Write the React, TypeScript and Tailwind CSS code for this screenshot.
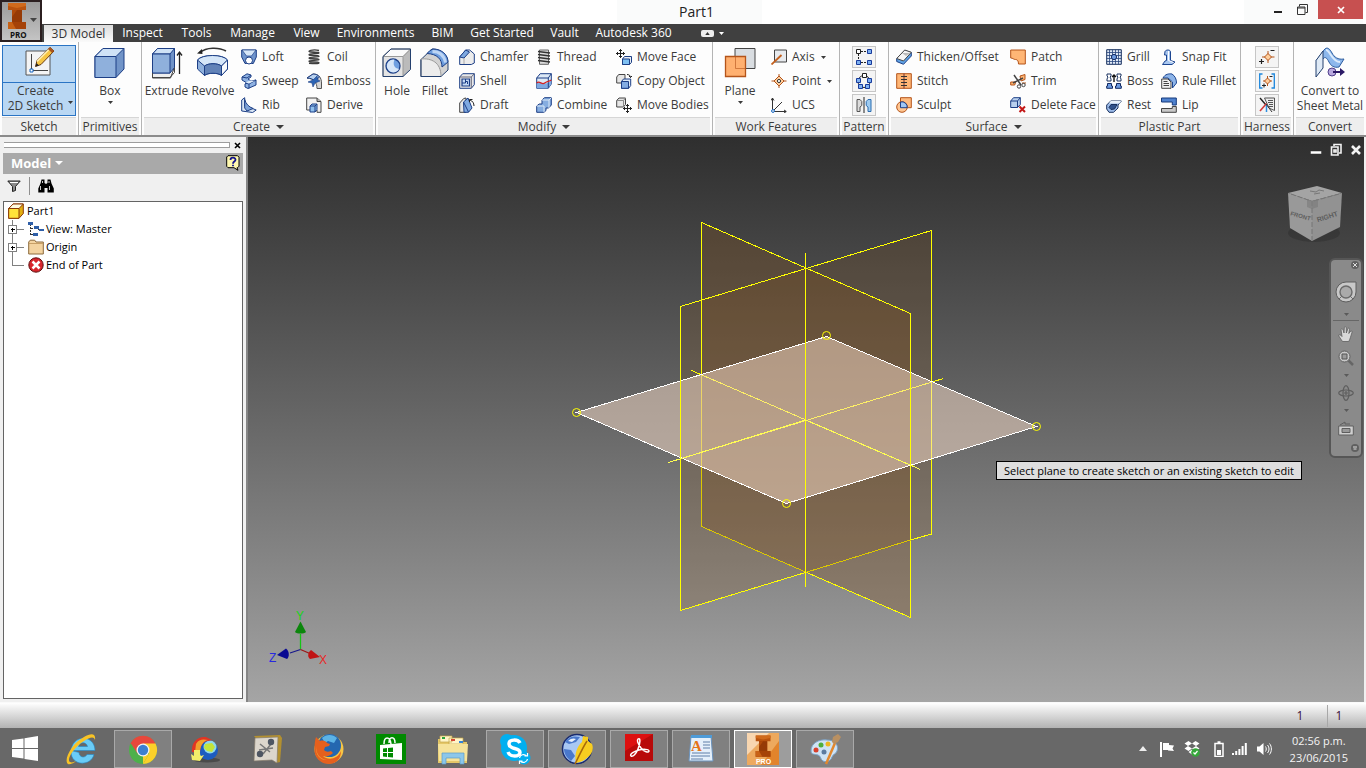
import React from "react";
import type { ReactNode } from "react";

const NAVY = "#1d3f86";
const DARK = "#454545";
const RUST = "#b4541a";

const small: Record<string, ReactNode> = {
  loft: (
    <>
      <path d="M.7 1h14.600v7l-3 6.500H4L.7 8z" fill="#6f94cc" stroke={NAVY} />
      <path d="M1 1h14l-4.500 6h-5z" fill="#d6e6f7" stroke={NAVY} strokeWidth=".7" />
      <circle cx="8" cy="11.500" r="3.500" fill="#fff" stroke={NAVY} />
    </>
  ),
  sweep: (
    <>
      <path d="M1 4l5-3.200L10 2v2l-3 2 3 2 5-1v5l-8 3.500-3-1.500v-3l2-1-5-3z" fill="#8fb2e2" stroke={NAVY} />
      <path d="M1 4l5 1 4-3M4 10l4 1 7-4M8 11v4.500" fill="none" stroke={NAVY} />
      <path d="M4.500 9.500L9 7.500l5 .2-6 2.800z" fill="#deebf9" />
    </>
  ),
  rib: (
    <>
      <path d="M.7 3l3-2.300V9l9 3 2.500 1-3.500 2.500L.7 14z" fill="#dce8f6" stroke={NAVY} />
      <path d="M3.700 2.500c1 4 4 7.500 8.500 9L6 14 3.700 11z" fill="#7ea3d8" stroke={NAVY} />
    </>
  ),
  coil: (
    <g fill="none" stroke="#3d3d3d" strokeWidth="1.300">
      <path d="M13 1.500C9 .5 3 1 3 2.500s10 0 10 1.500-10 0-10 1.700 10 0 10 1.600-10 0-10 1.700 10 0 10 1.600-10 0-10 1.700 10 0 10 1.400-6 1-10 .6" />
      <path d="M3 2.500l10 1.500M3 5.700l10 1.600M3 9l10 1.600M3 12.300L13 13.700" strokeWidth=".8" />
    </g>
  ),
  emboss: (
    <>
      <path d="M1 5l6-4c6 0 8.500 4 8.500 9v5.500H11C11 10 8 5.500 1 5z" fill="#d5d5d5" stroke="#555" />
      <path d="M1 5l6-4c3 0 5 1 6.500 3l-5 4C7 6 4 5 1 5z" fill="#b9d2ef" stroke={NAVY} />
      <path d="M2 9l5-2 4-4 1 4 2 1-5 2-2 4-1-4z" fill="#2c64b4" stroke={NAVY} strokeWidth=".6" />
    </>
  ),
  derive: (
    <>
      <path d="M.7 1H11l4 3.500V15.300H11V13H.7z" fill="#f1f1f1" stroke={DARK} />
      <path d="M11 1v3.500h4" fill="#bbb" stroke={DARK} />
      <path d="M4 9l2-2h5v5.500l-2 2.500H4z" fill="#8fc0ee" stroke={NAVY} />
      <path d="M4 9h5l2-2M9 9v6" fill="none" stroke={NAVY} />
    </>
  ),
  chamfer: (
    <>
      <path d="M.7 8l6-7h4L15.300 5v9l-3 1.500H.7z" fill="#ececec" stroke={NAVY} />
      <path d="M.7 8l6-7L10.500 3 5 9z" fill="#7fa9e0" stroke={NAVY} />
      <path d="M5 9v6" stroke="#aaa" />
    </>
  ),
  shell: (
    <>
      <path d="M.7 4l3-3.300h11.600v11l-3 3.600H.7z" fill="#e9e9e9" stroke={NAVY} />
      <path d="M.7 4h11.600l3-3.300M12.300 4v11.300" fill="none" stroke="#667" />
      <path d="M3 6h7.500v7H3z" fill="#c5daf5" stroke={NAVY} strokeWidth="1.200" />
      <path d="M6.500 6v4H3M6 8.500h2.500V11" fill="none" stroke={NAVY} />
    </>
  ),
  draft: (
    <>
      <path d="M.7 6l4-4.500L7 1v14.300H.7z" fill="#e9e9e9" stroke={DARK} />
      <path d="M4.500 5L9 1l4 10-3.500 4.300H5z" fill="#7fa9e0" stroke={NAVY} />
      <path d="M4.500 5l5 10" stroke={NAVY} />
      <path d="M11 3c2.500 1 4 3 4 6M10.500 5V2.500h3" fill="none" stroke="#222" />
    </>
  ),
  thread: (
    <>
      <path d="M3.500 1h9v14.300h-9z" fill="#ddd" stroke="#666" />
      <path d="M2 2.500L14 4M2 5.500L14 7M2 8.500L14 10M2 11.500L14 13" stroke="#333" strokeWidth="1.300" />
    </>
  ),
  split: (
    <>
      <path d="M.7 5l3.500-4.300h11.100V11l-3 4.300H.7z" fill="#dde9f6" stroke={NAVY} />
      <path d="M.7 10.500c3-3 5 2 8 0l3.600-.5 3-3V11l-3 4.300H.7z" fill="#7fa9e0" />
      <path d="M.7 5h11.600l3-4.300M12.300 5v10" fill="none" stroke={NAVY} />
      <path d="M.7 10c3-3 5 2.500 8 0s4-1 6.600-3" fill="none" stroke="#d42020" strokeWidth="1.300" />
    </>
  ),
  combine: (
    <>
      <path d="M.7 9l2.500-2H6V3l2.500-2.300h6.800V8l-2.600 3H10v2.500l-2 1.800H.7z" fill="#86ade0" stroke={NAVY} />
      <path d="M6 3h7l2.300-2.300M13 3v8M.7 9H8v6.300" fill="none" stroke="#dbe8f6" />
    </>
  ),
  moveFace: (
    <>
      <path d="M4.500 0v9M0 4.500h9M3 1.500h3M3 7.500h3M1.500 3v3M7.500 3v3" stroke="#222" fill="none" />
      <path d="M6.500 10l2-2.500h7v5.800l-2 2.200h-7z" fill="#e9eef5" stroke={NAVY} />
      <path d="M6.500 10h7v5.500h-7z" fill="#7fc0f2" stroke={NAVY} />
    </>
  ),
  copyObject: (
    <>
      <path d="M.7 4l2-2.500H9v6L7 10H.7z" fill="#e6e6e6" stroke={DARK} />
      <path d="M5.500 8.500l2-2.500h7.200v6.500l-2 2.800H5.500z" fill="#dce8f6" stroke={NAVY} />
      <path d="M5.500 8.500h7v6.800h-7z" fill="#83ace2" stroke={NAVY} />
      <path d="M11 1.500c2 0 3.500 1 3.500 3M13 3l1.500 1.500L16 3" fill="none" stroke="#222" />
    </>
  ),
  moveBodies: (
    <>
      <path d="M.7 3.500L3 1h6.500v6.500l-2 2.500H.7z" fill="#e6e6e6" stroke={DARK} />
      <path d="M.7 3.500h6.800L9.500 1M7.500 3.500V10" fill="none" stroke="#888" />
      <path d="M11.500 7v9M7 11.500h9M10 8.500h3M10 14.500h3M8.500 10v3M14.500 10v3" stroke="#222" />
    </>
  ),
  axis: (
    <>
      <path d="M3.500 1h12v12h-12z" fill="#e7eaee" stroke={DARK} />
      <path d="M.5 15.500L10.500 6" stroke="#c3601e" strokeWidth="1.800" />
    </>
  ),
  point: (
    <>
      <path d="M8 1v14M.5 8h15" stroke={RUST} />
      <path d="M8 3l5 5-5 5-5-5z" fill="#ffcf9d" stroke={RUST} />
      <circle cx="8" cy="8" r="1.600" fill="#fff" stroke="#333" />
    </>
  ),
  ucs: (
    <g fill="none" stroke="#333">
      <path d="M1.500 1v13.500H15M1.500 14.500L11 5M0 3.500L1.500 1 3 3.500M13 13l2.300 1.500L13 16" />
      <circle cx="2" cy="14" r="1.400" fill="#fff" stroke="#1565c0" />
    </g>
  ),
  rect: (
    <g stroke="#222" fill="none">
      <path d="M5 2.500h6M2.500 5v6M5 13.500h6" strokeDasharray="2 1" />
      <path d="M.5.500h4v4h-4z" fill="#fff" />
      <path d="M11.500.500h4v4h-4zM.5 11.500h4v4h-4zM11.500 11.500h4v4h-4z" fill="#7db0f0" stroke="#173a9c" />
    </g>
  ),
  circ: (
    <g stroke="#222">
      <circle cx="8" cy="8.500" r="6" fill="none" />
      <path d="M6.500.500h4v4h-4z" fill="#fff" />
      <path d="M.5 5.500h4v4h-4zM11.500 5.500h4v4h-4zM2.500 11.500h4v4h-4zM9.500 11.500h4v4h-4z" fill="#7db0f0" stroke="#173a9c" />
    </g>
  ),
  mirror: (
    <>
      <path d="M8 0v16" stroke="#222" />
      <path d="M1 2.500h3l1.800 2v4L4 10v4.500H1z" fill="#dcdcdc" stroke="#555" />
      <path d="M15 2.500h-3l-1.800 2v4L12 10v4.500h3z" fill="#9ecbf0" stroke="#2b6cb0" />
    </>
  ),
  thicken: (
    <>
      <path d="M.7 10l8-8.500 6.600 2V7L7.500 15.300.7 12.500z" fill="#5fa3e6" stroke={NAVY} />
      <path d="M.7 9.500l8-8.500 6.600 2.300L7.500 12z" fill="#f6f6f6" stroke="#444" />
      <path d="M6 4l4 3 4-3" fill="#bbb" />
    </>
  ),
  stitch: (
    <>
      <path d="M.7.700h14.600v14.600H.7z" fill="#ffb675" stroke={RUST} />
      <path d="M8 .7v14.600" stroke="#733" />
      <path d="M5 3.500h6M5 6.500h6M5 9.500h6M5 12.500h6" stroke="#333" strokeWidth="1.200" />
    </>
  ),
  sculpt: (
    <>
      <path d="M4.500.700h10.800v10H4.500z" fill="#ffbb80" stroke={RUST} />
      <circle cx="6" cy="10" r="5.300" fill="#ffc692" stroke={RUST} />
      <path d="M4.500 5a5.300 5.300 0 0 1 6.700 5.700H4.500z" fill="#9fc6f5" stroke={NAVY} />
    </>
  ),
  patch: <path d="M.7 1h14.600v14H8.500c0-3-1-4.500-3-4.500S3 9 .7 9z" fill="#ffb675" stroke={RUST} />,
  trim: (
    <>
      <path d="M10 3l5-1.500v5L11 8z" fill="#ffb675" stroke={RUST} />
      <path d="M.7 9h5l-1 3h-4zM12 10h4" fill="#ffb675" stroke={RUST} />
      <path d="M4 2l7 10M13 5L3 10" stroke="#444" strokeWidth="1.500" />
      <circle cx="9" cy="13.500" r="1.700" fill="none" stroke="#444" />
      <circle cx="13.500" cy="12" r="1.700" fill="none" stroke="#444" />
    </>
  ),
  deleteFace: (
    <>
      <path d="M.7 4L3.500.7h6.800v6.800L7.500 10.500H.7z" fill="#b9d0ee" stroke={NAVY} />
      <path d="M.7 4h6.800L10.300.7M7.500 4v6.500" fill="none" stroke={NAVY} />
      <path d="M9.500 9.500l5.500 5.500M15 9.500L9.500 15" stroke="#c31818" strokeWidth="2" />
    </>
  ),
  grill: (
    <>
      <path d="M.7.700h14.600v14.600H.7z" fill="#dfe8f5" stroke="#18305e" />
      <path d="M3.500.7v14.600M6.500.7v14.600M9.500.7v14.600M12.500.7v14.600M.7 3.500h14.600M.7 6.500h14.600M.7 9.500h14.600M.7 12.500h14.600" stroke="#27447c" strokeWidth=".8" />
      <circle cx="8" cy="8" r="2.600" fill="#6e9be0" stroke="#122a63" />
    </>
  ),
  boss: (
    <>
      <path d="M1 1h4v2l-1 1 1 2v2H1V6l1-2-1-1zM11 1h4v2l-1 1 1 2v2h-4V6l1-2-1-1z" fill="#fff" stroke="#18305e" />
      <path d="M1.500 10.500h4v2.500h1v2.300H.7V13h.8zM10.500 10.500h4v2.500h.8v2.300H9.500V13h1z" fill="#6e9be0" stroke="#122a63" />
      <path d="M8 9V2M6 4l2-2 2 2" stroke="#111" strokeWidth="1.400" fill="none" />
    </>
  ),
  rest: (
    <>
      <path d="M.7 8l4-4h10.600L12 8v3l-4.500 4.300H3L.7 12z" fill="#9dbcea" stroke="#18305e" />
      <path d="M5 7.500h6L8.500 12 5 12.500 3 10.500z" fill="#31528c" stroke="#18305e" />
      <path d="M4.700 4h10.600l-2 2.500H3z" fill="#e8f0fa" />
    </>
  ),
  snap: (
    <>
      <path d="M4 2.500c1-2 5-2 5.500 0v9L14 13l-3 2.500H1.500L4 12l1.500-.5V6H3.500z" fill="#a9c7f0" stroke="#1c4590" />
      <path d="M7.500 2v9.500l5 2" fill="none" stroke="#fff" />
    </>
  ),
  ruleFillet: (
    <>
      <path d="M2 5C4 1 8 .5 11 1c3 2 4.500 5 4.500 9l-4 5V9L7 5z" fill="#8db4e8" stroke="#1c4590" />
      <path d="M.7 6H7l3 3v6.300H.7z" fill="#f0f0f0" stroke="#444" />
      <path d="M2.500 8.500h4M2.500 10.500h5.500M2.500 12.500h5.500" stroke="#444" />
    </>
  ),
  lip: (
    <>
      <path d="M.5 1h14.800v7h-4V5H.5z" fill="#4f82cf" stroke="#173a7c" />
      <path d="M.5 11.500h10.800V9.500h4v5.800H.5z" fill="#c9c9c9" stroke="#444" />
    </>
  ),
  harnessPoint: (
    <>
      <path d="M9 2v12M3 8h12.500" stroke={RUST} />
      <path d="M9 4.500L12.500 8 9 11.500 5.500 8z" fill="#ffcf9d" stroke={RUST} />
      <path d="M11.500 1.500h4M0 12.500h5M2.500 10v5" stroke="#222" strokeWidth="1.200" />
    </>
  ),
  harnessBracket: (
    <>
      <path d="M3.500 1H.7v14h2.800M12.500 1h2.800v14h-2.800" fill="none" stroke="#1c86dc" strokeWidth="1.300" />
      <path d="M8.500 3v10M4 8h9" stroke={RUST} />
      <path d="M8.500 5L11.500 8l-3 3-3-3z" fill="#ffcf9d" stroke={RUST} />
      <path d="M10.500 3.500h3M3 12.500h4M5 10.500v4" stroke="#222" />
    </>
  ),
  harnessSheet: (
    <>
      <path d="M5.500 1h10v12.500L10 11z" fill="#eee" stroke="#555" />
      <path d="M9 3.500h5M9 5.500h5M10 7.500h4M10 9.500h4" stroke="#555" />
      <path d="M1 1l6 7" stroke="#222" strokeWidth="1.400" />
      <path d="M7.500 6.500L1 14" stroke="#d33a3a" strokeWidth="1.600" />
      <path d="M7.500 8v7" stroke="#2e8fe0" strokeWidth="1.500" />
      <path d="M7 7l6 8" stroke="#333" />
    </>
  ),
};

const big: Record<string, ReactNode> = {
  sketch: (
    <>
      <path d="M3 5h24v24H3z" fill="#f4f4f4" stroke="#555" />
      <path d="M8.500 8v16.500H25" fill="none" stroke="#444" />
      <path d="M7 23h3v3H7z" fill="#fff" stroke="#1565c0" />
      <path d="M12.500 20.500l1.500-6L27 1.500 31 5 18 18.500z" fill="#f6c544" stroke="#6b3a10" />
      <path d="M14 15.500L26 3.500" stroke="#fff1b8" strokeWidth="1.500" />
      <path d="M25 3l2-2 4 4-2 2z" fill="#a8541f" />
      <path d="M12.500 20.500l1-3.500 2.500 2.500z" fill="#222" />
    </>
  ),
  box: (
    <>
      <path d="M1 9.500l8-8h21V22l-8 8.500H1z" fill="#7194c8" stroke={NAVY} />
      <path d="M1 9.500l8-8h21l-8 8z" fill="#cfe2f6" stroke={NAVY} />
      <path d="M1 9.500h21v21H1z" fill="#8fb0dc" stroke={NAVY} />
    </>
  ),
  extrude: (
    <>
      <path d="M1.500 26l6-6h16l-4 11h-18z" fill="#eee" stroke={DARK} />
      <path d="M1.500 7l5-5.500h17v19l-4.500 5.500H1.500z" fill="#6f92c6" stroke={NAVY} />
      <path d="M1.500 7l5-5.500h17L19 7z" fill="#cfe2f6" stroke={NAVY} />
      <path d="M1.500 7H19v19H1.500z" fill="#8fb0dc" stroke={NAVY} />
      <path d="M1.500 26v4.500H19l4.500-5v-5" fill="none" stroke={DARK} />
      <path d="M28.500 27V6M26 8.500L28.500 5 31 8.500" fill="none" stroke="#222" strokeWidth="1.300" />
    </>
  ),
  revolve: (
    <>
      <path d="M.5 13C5 7 26 7 30.500 13v9l-6 6.500c-3-3-14-3-17 0L.5 22z" fill="#8fb0dc" stroke={NAVY} />
      <path d="M.5 13C5 7 26 7 30.500 13l-6 6c-4-3-13-3-17 0z" fill="#d5e6f8" stroke={NAVY} />
      <path d="M7.500 19c4-3 13-3 17 0v9.500c-3-3-14-3-17 0z" fill="#6283b8" stroke={NAVY} />
      <path d="M24.500 19l6-6v9l-6 6.500z" fill="#f6f9fc" stroke={NAVY} />
      <path d="M3 5.500C9 0 22 0 29 4" fill="none" stroke="#333" strokeWidth="1.500" />
      <path d="M0 6.500L5 2l.5 5z" fill="#222" />
    </>
  ),
  hole: (
    <>
      <path d="M2 9.500L10 2h19.500v20.500L22 29.500H2z" fill="#bbb" />
      <path d="M2 9.500L10 2h19.500L22 9.500z" fill="#fafafa" stroke="#888" />
      <path d="M2 9.500h20v20H2z" fill="#e4e4e4" stroke="#999" />
      <path d="M2 9.500L10 2h19.500v20.500L22 29.500H2z" fill="none" stroke="#24406e" />
      <circle cx="12" cy="19" r="7" fill="#6f9fe0" stroke={NAVY} strokeWidth="1.300" />
      <path d="M13.500 12.500a6.500 6.500 0 1 0 4.700 9.300c-5 0-6.700-4.800-4.700-9.300z" fill="#d7e6f8" />
    </>
  ),
  fillet: (
    <>
      <path d="M2 12.500L13 2c9 0 16 6 16 14v7l-7 6.500H2z" fill="#d2d2d2" stroke="#24406e" />
      <path d="M11 3.500L14 2c9 0 15 6 15 13l-6 5C23 12 18 7 8 6.500z" fill="#6f9fe0" stroke={NAVY} />
      <path d="M13.500 4.500c7 0 11.500 4 13 11" fill="none" stroke="#bdd5f4" strokeWidth="3" />
      <path d="M2 12c10-1 20 3 20 17.500H2z" fill="#ececec" stroke="#999" />
      <path d="M2 12.500v17h20" fill="none" stroke="#24406e" />
    </>
  ),
  plane: (
    <>
      <path d="M11 1.500h20v20H11z" fill="#d9dde1" stroke="#444" />
      <path d="M1.500 9.500h20v20h-20z" fill="#ffb070" stroke={RUST} strokeWidth="1.300" />
      <path d="M11.500 10v11.500H21" fill="none" stroke={RUST} opacity=".6" />
    </>
  ),
  convert: (
    <>
      <path d="M10 3c3-4 6-1 8 3s6 7 12 6l-5 8c-5 1-8-1-10-5s-4-6-6-3l-7 2z" fill="#8db8ec" stroke="#2b5b9e" />
      <path d="M12 3c4 0 6 12 14 12" fill="none" stroke="#dcebfb" strokeWidth="2" />
      <path d="M2 13.500L9 4v17l-7 9z" fill="#dfeaf6" stroke="#24406e" />
      <circle cx="18" cy="25" r="4" fill="#b9a9de" stroke="#51408c" />
      <path d="M19 25h9" stroke="#2c1a66" strokeWidth="2" />
      <path d="M26 21l5 4-5 4z" fill="#2c1a66" />
    </>
  ),
};

const Small = ({ name }: { name: string }) => (
  <svg viewBox="0 0 16 16" className="size-4 shrink-0" aria-hidden="true">
    {small[name]}
  </svg>
);

const Caret = ({ className = "h-[3px] w-[5px]" }: { className?: string }) => (
  <svg viewBox="0 0 10 6" preserveAspectRatio="none" className={`shrink-0 fill-current ${className}`} aria-hidden="true">
    <path d="M0 0h10L5 6z" />
  </svg>
);

type Item = [icon: string, label: string, caret?: boolean];

const Column = ({ items, width }: { items: Item[]; width: string }) => (
  <div className={`flex shrink-0 flex-col pt-[3px] ${width}`}>
    {items.map(([icon, label, caret]) => (
      <button key={label} type="button" className="flex h-6 items-center whitespace-nowrap hover:bg-sky-50">
        <Small name={icon} />
        <span className="ml-[5px]">{label}</span>
        {caret && <span className="ml-1.5"><Caret /></span>}
      </button>
    ))}
  </div>
);

const BigButton = ({ icon, label, width, caret }: { icon: string; label: string[]; width: string; caret?: boolean }) => (
  <button type="button" className={`flex shrink-0 flex-col items-center pt-[5px] leading-[15px] hover:bg-sky-50 ${width}`}>
    <svg viewBox="0 0 32 32" className="mb-1 size-8" aria-hidden="true">{big[icon]}</svg>
    {label.map((line) => (
      <span key={line} className="whitespace-nowrap">{line}</span>
    ))}
    {caret && <span className="mt-[3px]"><Caret /></span>}
  </button>
);

const IconStack = ({ items }: { items: [string, string][] }) => (
  <div className="flex flex-1 flex-col items-center gap-0.5 pt-1">
    {items.map(([icon, label]) => (
      <button key={icon} type="button" aria-label={label} className="flex h-[22px] w-6 items-center justify-center border border-[#c6c6c6] bg-[#f4f4f4]">
        <Small name={icon} />
      </button>
    ))}
  </div>
);

const Panel = ({ title, width, menu, children }: { title: string; width: string; menu?: boolean; children: ReactNode }) => (
  <section className={`flex flex-col border-r border-[#b4b4b4] px-0.5 last:border-r-0 ${width}`}>
    <div className="flex flex-1">{children}</div>
    <h2 className="flex h-[18px] items-center justify-center gap-1.5 border-t border-[#d6d6d6] bg-[#eeeeee] whitespace-nowrap">
      {title}
      {menu && <Caret className="h-1 w-2" />}
    </h2>
  </section>
);

const tabs: [string, string][] = [
  ["Inspect", "w-[59px]"],
  ["Tools", "w-[49px]"],
  ["Manage", "w-[63px]"],
  ["View", "w-[45px]"],
  ["Environments", "w-[93px]"],
  ["BIM", "w-[41px]"],
  ["Get Started", "w-[78px]"],
  ["Vault", "w-[47px]"],
  ["Autodesk 360", "w-[91px]"],
];

const InventorGlyph = () => (
  <>
    <path d="M7 3h18v7h-4v12h4v7H7v-7h4V10H7z" fill="#b9530f" />
    <path d="M7 3h18v3l-9 2-9-2z" fill="#d06a1c" />
    <path d="M11 10h10v12H11z" fill="#963a06" />
    <path d="M11 10h5l-5 7z" fill="#b04a0a" />
    <path d="M7 22h18v7H7z" fill="#a54208" />
    <path d="M7 22h4l4 7H7z" fill="#c86216" />
  </>
);

const Header = () => (
  <header className="flex shrink-0">
    <button type="button" aria-label="Application menu" className="flex size-[42px] flex-col items-start border-2 border-[#2b1f20] bg-gradient-to-b from-[#9a9a9a] to-[#c4c4c4] text-[#111]">
      <span className="flex items-center">
        <svg viewBox="7 2 18 28" className="ml-1.5 h-7 w-[18px]" aria-hidden="true"><InventorGlyph /></svg>
        <span className="ml-1 pt-2 text-[#444]"><Caret className="h-1 w-[7px]" /></span>
      </span>
      <span className="ml-2 text-[8px] leading-[10px] font-bold">PRO</span>
    </button>
    <div className="flex min-w-0 flex-1 flex-col">
      <div className="grid h-6 grid-cols-[575fr_146fr_604fr] bg-white">
        <span />
        <h1 className="bg-[#fafbfb] pl-3.5 text-center text-[14px] leading-6 text-[#222]">Part1</h1>
        <div className="flex items-start justify-end pr-[3px]">
          <div className="flex h-6 bg-[#fafbfb] pl-5">
            <button type="button" aria-label="Minimize" className="flex h-[22px] w-[27px] items-center justify-center">
              <svg viewBox="0 0 10 10" className="size-[10px]"><path d="M1 5h8v2H1z" fill="#222" /></svg>
            </button>
            <button type="button" aria-label="Restore" className="flex h-[18px] w-[27px] items-center justify-center pr-1">
              <svg viewBox="0 0 11 11" className="size-[11px]" fill="none" stroke="#333">
                <path d="M.5 3h7.500v7.500H.5zM.5 4h7.500M2.500 2.500v-2h8v8h-2" />
              </svg>
            </button>
            <button type="button" aria-label="Close" className="flex h-[19px] w-[45px] items-center justify-center bg-[#c75050]">
              <svg viewBox="0 0 8 8" className="size-2"><path d="M1 1l6 6M7 1L1 7" stroke="#fff" strokeWidth="1.700" /></svg>
            </button>
          </div>
        </div>
      </div>
      <nav className="flex h-[18px] items-center bg-[#404040] pl-0.5 text-white">
        <a href="#model" className="flex h-[17px] w-[69px] items-center justify-center self-end bg-gradient-to-b from-[#dcdcdc] to-[#fafafa] whitespace-nowrap text-[#333]">3D Model</a>
        {tabs.map(([name, width]) => (
          <a key={name} href={`#${name}`} className={`text-center leading-[18px] whitespace-nowrap ${width}`}>{name}</a>
        ))}
        <button type="button" aria-label="Minimize ribbon" className="ml-[22px] flex h-[7px] w-[13px] items-center justify-center rounded-xs bg-[#eee] text-[#333]">
          <svg viewBox="0 0 6 4" className="h-[3px] w-[5px]"><path d="M3 0l3 4H0z" fill="currentColor" /></svg>
        </button>
        <button type="button" aria-label="Ribbon options" className="ml-[5px] flex"><Caret /></button>
      </nav>
    </div>
  </header>
);

const Ribbon = () => (
  <div className="flex h-[95px] shrink-0 border-b-2 border-[#8b8b8b] bg-[#fdfdfd] text-[#3b3b3b]">
    <Panel title="Sketch" width="w-[79px]">
      <button type="button" className="mt-[3px] mb-px flex flex-1 flex-col border border-[#2a74c4] bg-[#b9d7f3] leading-[15px]">
        <span className="flex h-[37px] justify-center self-stretch border-b border-[#2a74c4]">
          <svg viewBox="0 0 32 32" className="size-8" aria-hidden="true">{big.sketch}</svg>
        </span>
        <span className="flex flex-1 items-center self-stretch pb-0.5">
          <span className="flex-1 text-center">Create<br />2D Sketch</span>
          <span className="mt-2 mr-0.5"><Caret /></span>
        </span>
      </button>
    </Panel>
    <Panel title="Primitives" width="w-[63px]">
      <BigButton icon="box" label={["Box"]} width="w-full" caret />
    </Panel>
    <Panel title="Create" width="w-[234px]" menu>
      <BigButton icon="extrude" label={["Extrude"]} width="w-[45px]" />
      <BigButton icon="revolve" label={["Revolve"]} width="w-[48px]" />
      <Column width="ml-1 w-[65px]" items={[["loft", "Loft"], ["sweep", "Sweep"], ["rib", "Rib"]]} />
      <Column width="w-[65px]" items={[["coil", "Coil"], ["emboss", "Emboss"], ["derive", "Derive"]]} />
    </Panel>
    <Panel title="Modify" width="w-[337px]" menu>
      <BigButton icon="hole" label={["Hole"]} width="w-[38px]" />
      <BigButton icon="fillet" label={["Fillet"]} width="w-[38px]" />
      <Column width="ml-[5px] w-[77px]" items={[["chamfer", "Chamfer"], ["shell", "Shell"], ["draft", "Draft"]]} />
      <Column width="w-[80px]" items={[["thread", "Thread"], ["split", "Split"], ["combine", "Combine"]]} />
      <Column width="w-[94px]" items={[["moveFace", "Move Face"], ["copyObject", "Copy Object"], ["moveBodies", "Move Bodies"]]} />
    </Panel>
    <Panel title="Work Features" width="w-[127px]">
      <BigButton icon="plane" label={["Plane"]} width="w-[50px]" caret />
      <Column width="ml-[6px] w-[64px]" items={[["axis", "Axis", true], ["point", "Point", true], ["ucs", "UCS"]]} />
    </Panel>
    <Panel title="Pattern" width="w-[49px]">
      <IconStack items={[["rect", "Rectangular pattern"], ["circ", "Circular pattern"], ["mirror", "Mirror"]]} />
    </Panel>
    <Panel title="Surface" width="w-[210px]" menu>
      <Column width="ml-[5px] w-[114px]" items={[["thicken", "Thicken/Offset"], ["stitch", "Stitch"], ["sculpt", "Sculpt"]]} />
      <Column width="w-[86px]" items={[["patch", "Patch"], ["trim", "Trim"], ["deleteFace", "Delete Face"]]} />
    </Panel>
    <Panel title="Plastic Part" width="w-[142px]">
      <Column width="ml-[5px] w-[55px]" items={[["grill", "Grill"], ["boss", "Boss"], ["rest", "Rest"]]} />
      <Column width="w-[78px]" items={[["snap", "Snap Fit"], ["ruleFillet", "Rule Fillet"], ["lip", "Lip"]]} />
    </Panel>
    <Panel title="Harness" width="w-[53px]">
      <IconStack items={[["harnessPoint", "Place point"], ["harnessBracket", "Place pin group"], ["harnessSheet", "Harness properties"]]} />
    </Panel>
    <Panel title="Convert" width="min-w-[72px] flex-1">
      <BigButton icon="convert" label={["Convert to", "Sheet Metal"]} width="w-[68px]" />
    </Panel>
  </div>
);

const Expander = () => (
  <button type="button" aria-label="Expand" className="flex h-[18px] w-[16px] shrink-0">
    <svg viewBox="0 0 16 18" className="h-[18px] w-4" shapeRendering="crispEdges">
      <path d="M4.500 0v18M9 9.500h7" stroke="#808080" />
      <path d="M.5 5.500h8v8h-8z" fill="#fff" stroke="#808080" />
      <path d="M2.500 9.500h4M4.500 7.500v4" stroke="#000" />
    </svg>
  </button>
);

const ModelTree = () => (
  <ul className="mb-[3px] ml-[3px] flex-1 border border-[#646464] bg-white pl-1 text-[11px] leading-[18px] text-black">
    <li className="flex h-[18px] items-center gap-[3px]">
      <svg viewBox="0 0 16 16" className="size-4" aria-hidden="true">
        <path d="M.7 5.500L5 1h10.300v9.500L11 15.300H.7z" fill="#e2ae10" stroke="#8a3a08" />
        <path d="M.7 5.500h10.300v9.800H.7z" fill="#ffe23a" stroke="#8a3a08" />
        <path d="M.7 5.500L5 1h10.300L11 5.500z" fill="#fffbe0" stroke="#8a3a08" />
      </svg>
      Part1
    </li>
    <li className="flex h-[18px] items-center">
      <Expander />
      <svg viewBox="0 0 16 16" className="mr-0.5 ml-1 size-4" aria-hidden="true" shapeRendering="crispEdges">
        <path d="M2.500 3v11M2.500 7.500h4M2.500 13.500h4M10 8.500h2" stroke="#333" fill="none" strokeDasharray="2 1" />
        <path d="M0 1h5v3H0zM6 5h5v3H6zM11 8h5v2h-5zM5 12h5v3H5z" fill="#2f5fa8" />
      </svg>
      View: Master
    </li>
    <li className="flex h-[18px] items-center">
      <Expander />
      <svg viewBox="0 0 16 16" className="mr-0.5 ml-1 size-4" aria-hidden="true">
        <path d="M.7 3l1.500-1.800h4.500L8 3h7.300v12H.7z" fill="#f3d3a0" stroke="#8c6a3c" />
        <path d="M1 4.500h14" stroke="#c79f66" />
      </svg>
      Origin
    </li>
    <li className="flex h-[18px] items-center">
      <svg viewBox="0 0 16 18" className="h-[18px] w-4" shapeRendering="crispEdges" aria-hidden="true">
        <path d="M4.500 0v9.500H16" stroke="#808080" fill="none" />
      </svg>
      <svg viewBox="0 0 16 16" className="mr-0.5 ml-1 size-4" aria-hidden="true">
        <circle cx="8" cy="8" r="7.200" fill="#d8252c" stroke="#601010" />
        <path d="M4.500 4.500l7 7M11.500 4.500l-7 7" stroke="#fff" strokeWidth="2.500" />
      </svg>
      End of Part
    </li>
  </ul>
);

const Browser = () => (
  <aside className="flex w-[248px] shrink-0 flex-col border-r-2 border-[#858585] bg-[#f0f0f0] pr-[3px]">
    <div className="flex h-4 shrink-0 items-center justify-between pr-0.5 pl-1">
      <div className="h-1.5 w-[226px] border-y border-r border-[#9c9c9c] bg-white" />
      <button type="button" aria-label="Close browser">
        <svg viewBox="0 0 7 7" className="size-[7px]"><path d="M1 1l5 5M6 1L1 6" stroke="#000" strokeWidth="1.600" /></svg>
      </button>
    </div>
    <div className="ml-[3px] flex h-[21px] shrink-0 items-center justify-between bg-[#a9a9a9] pr-[3px] pb-px pl-2 text-white">
      <button type="button" className="flex items-center gap-1 text-[13px] leading-4 font-bold">
        Model <Caret className="h-1 w-2" />
      </button>
      <button type="button" aria-label="Help">
        <svg viewBox="0 0 14 16" className="h-4 w-3.5">
          <path d="M2 .7h9.500l1.500 1.500v9l-1.500 1.500h-.5l1 2.600-4-2.600H2L.7 11.300V2z" fill="#fff9b0" stroke="#000" />
          <path d="M4.500 5c0-3 5-3 5-.3 0 2-2.500 1.700-2.500 4M7 9.700v1.500" fill="none" stroke="#12128c" strokeWidth="1.800" />
        </svg>
      </button>
    </div>
    <div className="flex h-[27px] shrink-0 items-center pb-1 pl-[7px]">
      <button type="button" aria-label="Filter">
        <svg viewBox="0 0 14 12" className="h-3 w-3.5"><path d="M.8 1h12.400L8.500 6.500v4l-3 1v-5z" fill="#8a8a8a" stroke="#222" /><path d="M3 2.500h8" stroke="#fff" /></svg>
      </button>
      <span className="mx-2 h-[18px] w-px bg-[#8f8f8f]" />
      <button type="button" aria-label="Find">
        <svg viewBox="0 0 16 14" className="h-3.5 w-4">
          <path d="M3.500.5h3V4L8 5l1.500-1V.5h3l1 4 2.300 5v4H9.500V9h-3v4.500H.3v-4l2.200-5z" fill="#000" />
          <path d="M2.500 7v4M11.500 7v4M4.500 2v2M11 2v2" stroke="#ddd" strokeWidth=".9" />
        </svg>
      </button>
    </div>
    <ModelTree />
  </aside>
);

const Scene = () => (
  <svg viewBox="248 138 1116 564" className="absolute inset-0 size-full" role="img" aria-label="Origin planes of Part1">
    <g stroke="none">
      <path d="M701.500 222.500L910.500 313.500V617.500L701.500 526.500z" fill="#7e501e" fillOpacity=".32" />
      <path d="M931.500 230.500L680.500 306.500V610.500L931.500 534.500z" fill="#7e501e" fillOpacity=".22" />
    </g>
    <g fill="none" stroke="#ffff00" shapeRendering="crispEdges">
      <path d="M701.500 375V222.500L910.500 313.500V617.500L805.500 572" />
      <path d="M931.500 534V230.500L680.500 306.500V610.500L805.500 572.500" />
      <path d="M701.500 375V526.500L805.500 572M805.500 572.500L910.500 540" stroke="#dcc800" />
      <path d="M910.500 540L931.500 534M691.500 370.500L920.500 469.500M668.500 462.500L943.500 378.500" />
    </g>
    <path d="M576.500 412.500L826.500 336.500L1036.500 426.500L786.500 503.500z" fill="#fbdfcb" fillOpacity=".5" />
    <g fill="none" stroke="#ffff00" shapeRendering="crispEdges">
      <path d="M576.500 412.500L826.500 336.500L1036.500 426.500L786.500 503.500z" stroke="#ffffff" />
      <path d="M805.500 253V587M680.500 375V460M910.500 372V466" />
      <path d="M805.500 420L920.500 469.500M668.500 462.500L805.500 420" stroke="#ffff50" />
      <g shapeRendering="auto">
        <circle cx="576.500" cy="412.500" r="4" />
        <circle cx="826.500" cy="335.500" r="4" />
        <circle cx="1036.500" cy="426.500" r="4" />
        <circle cx="786.500" cy="503.500" r="4" />
      </g>
    </g>
    <g>
      <path d="M300.500 649V634" stroke="#16c516" strokeWidth="1.300" />
      <path d="M300.500 649.500L290 653" stroke="#16168c" strokeWidth="1.300" />
      <path d="M300.500 649.500L311 654" stroke="#9c1616" strokeWidth="1.300" />
      <path d="M300.500 621.500L306 632c-2 2-9 2-11 0z" fill="#0c860c" />
      <path d="M277 655l9-6.500c3 2 4 8 1 10.500z" fill="#0a0a92" />
      <path d="M320 657l-9-7c-3 2-4 7-1 9z" fill="#c01414" />
      <g fontSize="12" fontFamily="'Liberation Sans', sans-serif">
        <text x="296" y="620" fill="#17d417">Y</text>
        <text x="269" y="662" fill="#2828e0">Z</text>
        <text x="319" y="664" fill="#e82828">X</text>
      </g>
    </g>
  </svg>
);

const ViewCube = () => (
  <svg viewBox="0 0 60 64" className="h-16 w-[60px]" role="img" aria-label="View cube">
    <ellipse cx="29" cy="50" rx="26" ry="9" fill="#000" opacity=".15" />
    <path d="M3 10L32 3l25 7L27 18z" fill="#a4a4a4" />
    <path d="M3 10l24 8v40L5 45z" fill="#999" />
    <path d="M57 10L27 18v40l28-14z" fill="#929292" />
    <path d="M6 11l20 7M54 11l-25 7M27 18v39" stroke="#757575" strokeDasharray="5 2" fill="none" />
    <path d="M22 16l5 2 6-2v8l-6 2-5-2z" fill="#7d7d7d" opacity=".7" />
    <path d="M25 8l6 1 3-2 5 1M29 11l6-1" stroke="#777" fill="none" />
    <g fill="#5d5d5d" fontWeight="700" fontFamily="'Liberation Sans', sans-serif" textAnchor="middle">
      <text transform="translate(15 35) rotate(16)" fontSize="6">FRONT</text>
      <text transform="translate(43 36) rotate(-18)" fontSize="7">RIGHT</text>
    </g>
  </svg>
);

const NavBar = () => (
  <div className="flex w-[34px] flex-col items-center rounded-md border-2 border-[#565656] bg-[#8a8a8a] pb-1 text-[#5a5a5a]">
    <button type="button" aria-label="Close navigation bar" className="mt-px mr-0.5 self-end">
      <svg viewBox="0 0 8 8" className="size-2"><circle cx="4" cy="4" r="4" fill="#606060" /><path d="M2 2l4 4M6 2L2 6" stroke="#ddd" /></svg>
    </button>
    <button type="button" aria-label="Steering wheel" className="mt-3">
      <svg viewBox="0 0 22 22" className="size-[22px]">
        <path d="M11 1h10v10A10 10 0 1 1 11 1z" fill="#c8c8c8" stroke="#5e5e5e" />
        <circle cx="11" cy="11" r="6" fill="#aaa" stroke="#6b6b6b" strokeWidth="1.400" />
        <path d="M4 18l3-3M18 18l-3-3" stroke="#6b6b6b" />
      </svg>
    </button>
    <span className="mt-2.5"><Caret /></span>
    <span className="mt-1 h-px w-[26px] bg-[#666]" />
    <button type="button" aria-label="Pan" className="mt-[5px]">
      <svg viewBox="0 0 16 16" className="size-4">
        <path d="M4.500 15.500C3 13 1 11 .7 9c1-1 2.300.5 3.300 1.500L3 3.500c.8-1.500 2 0 2.300 1L6 7l.3-5.500c1-1.500 2-.3 2 .5V7L10 2.500c1-1 2 0 1.500 1L10.800 7.500l2-2.500c1.300-.3 1.500 1 1 2-1 3-1.500 5.500-3 8.500z" fill="#d8d8d8" stroke="#5e5e5e" strokeWidth=".8" />
      </svg>
    </button>
    <button type="button" aria-label="Zoom" className="mt-2">
      <svg viewBox="0 0 16 16" className="size-4">
        <path d="M10 10l5 5" stroke="#666" strokeWidth="2.500" />
        <circle cx="6.500" cy="6.500" r="5.500" fill="#c8c8c8" stroke="#606060" />
        <path d="M4 4h5v5H4z" fill="#999" stroke="#555" />
      </svg>
    </button>
    <span className="mt-2"><Caret /></span>
    <button type="button" aria-label="Orbit" className="mt-2">
      <svg viewBox="0 0 16 16" className="size-4" fill="none" stroke="#5e5e5e" strokeWidth="1.200">
        <ellipse cx="8" cy="8" rx="3" ry="7.300" />
        <ellipse cx="8" cy="8" rx="7.300" ry="3" />
        <path d="M8 6v4M6 8h4" />
      </svg>
    </button>
    <span className="mt-2"><Caret /></span>
    <button type="button" aria-label="Look at" className="mt-2">
      <svg viewBox="0 0 16 16" className="size-4" stroke="#5e5e5e">
        <path d="M2 5l5-3v2h5" fill="none" />
        <path d="M.7 6h14.600v9H.7z" fill="#cfcfcf" />
        <path d="M4 8.500h8v4H4z" fill="#999" />
      </svg>
    </button>
    <button type="button" aria-label="Navigation options" className="mt-2 mr-0.5 self-end">
      <svg viewBox="0 0 8 8" className="size-2"><circle cx="4" cy="4" r="4" fill="#606060" /><path d="M2 3h4M2.500 5h3" stroke="#ddd" /></svg>
    </button>
  </div>
);

const Viewport = () => (
  <main className="relative flex-1 overflow-hidden border-t border-[#2a2a2a] bg-gradient-to-b from-[#2f2f2f] to-[#a5a5a5]">
    <Scene />
    <div className="absolute top-[5px] right-0.5 flex items-center gap-2 text-white">
      <button type="button" aria-label="Minimize document">
        <svg viewBox="0 0 12 12" className="size-3"><path d="M.5 7h11v3H.5z" fill="#fff" stroke="#333" strokeWidth=".5" /></svg>
      </button>
      <button type="button" aria-label="Restore document">
        <svg viewBox="0 0 12 14" className="h-3.5 w-3" fill="none" stroke="#f2f2f2" strokeWidth="1.600">
          <path d="M4 3V1.500h7V10H9M1.500 4h6.500v8H1.500zM4 7h2v2H4z" />
        </svg>
      </button>
      <button type="button" aria-label="Close document">
        <svg viewBox="0 0 12 12" className="size-3"><path d="M2 2l8 8M10 2l-8 8" stroke="#f2f2f2" strokeWidth="2.600" /></svg>
      </button>
    </div>
    <div className="absolute top-[45px] right-[19px]"><ViewCube /></div>
    <div className="absolute top-[120px] right-px"><NavBar /></div>
    <div role="tooltip" className="absolute top-[323px] right-[62px] flex h-[19px] w-[306px] items-center justify-center border border-black bg-[#dedede] text-[11px] whitespace-nowrap text-black">
      Select plane to create sketch or an existing sketch to edit
    </div>
  </main>
);

const StatusBar = () => (
  <div className="flex h-[26px] shrink-0 items-center justify-end border-t border-[#fafafa] bg-gradient-to-b from-white to-[#b3b3b3] text-[#3a0f3a]">
    <span className="w-[54px] text-center">1</span>
    <span className="h-[22px] w-px bg-[#a8a8a8]" />
    <span className="w-[22px] text-center">1</span>
    <span className="w-4" />
  </div>
);

const apps: { label: string; open?: boolean; active?: boolean; art: ReactNode }[] = [
  {
    label: "Internet Explorer",
    art: (
      <>
        <path d="M6 17.500h24c0-16-23-17-24 1 0 15 20 15 23 3h-7c-2 4-8 3-8-2zM13.500 13.500c1-5 8-5 9 0z" fill="#6accf7" fillRule="evenodd" stroke="#2388c8" strokeWidth=".6" />
        <path d="M3 31C-2 27 7 10 19 4c7-4 12-4 11 3-1-4-5-3-11 1C9 14 1 27 5 29c2 1 4 0 6-1-2 2-6 4-8 3z" fill="#f8c326" />
      </>
    ),
  },
  {
    label: "Chrome",
    open: true,
    art: (
      <>
        <circle cx="16" cy="17" r="14" fill="#4db04a" />
        <path d="M16 17L3.500 10.500A14 14 0 0 1 28.500 10.500z" fill="#e8473c" />
        <path d="M16 10.500h12.500A14 14 0 0 1 16 31l6-10z" fill="#fbd02a" />
        <path d="M3.800 10.200L10.500 20.500 16 17z" fill="#e8473c" />
        <path d="M16 31l6-10-6-2z" fill="#fbd02a" />
        <circle cx="16" cy="17" r="6.500" fill="#f4f4f4" />
        <circle cx="16" cy="17" r="5.200" fill="#3c7fd0" />
      </>
    ),
  },
  {
    label: "Download Manager",
    art: (
      <>
        <ellipse cx="18" cy="27" rx="13" ry="2.500" fill="#4a4a4a" />
        <circle cx="19" cy="17" r="10" fill="#1c5cc0" />
        <circle cx="21" cy="14" r="6.500" fill="#8fd9ea" />
        <path d="M16 11l7-1 3 4-3 5-5-1-3-3z" fill="#c3e53a" />
        <path d="M3 19C2 9 9 3 17 4l6 3-4 1c-5 0-8 5-8 12z" fill="#e03524" />
        <path d="M7 11c3-5 7-5 12-4-5 1-8 6-8 13l-5-1z" fill="#f2a02c" />
        <path d="M5 17h6c0 4 0 5 1 6l3-1-4 6-8-1-1-6 3 2z" fill="#f3ee6a" />
      </>
    ),
  },
  {
    label: "Diagrams",
    art: (
      <>
        <path d="M3 3l26-1 2 3-2 24-4 1z" fill="#b3902f" />
        <path d="M4 5l23-1-1 26-5-3-18 1z" fill="#dcd6cc" stroke="#857b6c" strokeWidth=".7" />
        <path d="M9 11l10 8M8 17l14-2M12 21l8-10" stroke="#777" strokeWidth="1.500" />
        <circle cx="20" cy="9" r="3.200" fill="#4e5663" />
        <circle cx="9" cy="21" r="3.200" fill="#4e5663" />
      </>
    ),
  },
  {
    label: "Firefox",
    art: (
      <>
        <circle cx="16" cy="16" r="14.500" fill="#f7c544" />
        <circle cx="16.500" cy="12.500" r="11.500" fill="#2467b0" />
        <path d="M9 5c4-4 11-4 15 0l-3 5-6-2-3 2z" fill="#5cb3e6" />
        <path d="M3 4l4 4c3-1 6 0 7 2l3 1-1 2-4 1-1 3c2 2 4 2 7 1l2 2c-3 3-7 4-10 3 5 5 15 3 18-5 0 8-5 13-12 13C7 31 1 24 1.500 16 1.500 11 2 7 3 4z" fill="#e5601e" />
        <path d="M3 13c0 8 4 13 11 14-6 1-12-5-11-14z" fill="#f39a34" />
      </>
    ),
  },
  {
    label: "Store",
    art: (
      <>
        <path d="M1 1h30v30H1z" fill="#008a00" />
        <path d="M5 12l22-2v17L5 26z" fill="#fff" />
        <path d="M9 11c0-8 6-8 7 0M14 10c0-7 6-7 6 0" fill="none" stroke="#fff" strokeWidth="1.500" />
        <path d="M8 15.500l4-.5v4H8zM13 15l5-.5V19h-5zM8 20h4v4l-4-.5zM13 20h5v4.500l-5-.4z" fill="#008a00" />
      </>
    ),
  },
  {
    label: "File Explorer",
    art: (
      <>
        <path d="M1 6h12l2 3h15v21H1z" fill="#e4c768" />
        <path d="M3 3h12v6H3zM12 5h14v6H12z" fill="#fff5c8" stroke="#c4a646" strokeWidth=".7" />
        <path d="M5 4h3v2H5z" fill="#2aa43b" />
        <path d="M14 6h4v2h-4z" fill="#d64934" />
        <path d="M22 8h4v2h-4z" fill="#3284d8" />
        <path d="M1 11h30l-1 17H2z" fill="#f6e39a" />
        <path d="M5 31V20h22v11h-4v-6H9v6z" fill="#8cc7ea" stroke="#5a9bc8" strokeWidth=".7" />
      </>
    ),
  },
  {
    label: "Skype",
    open: true,
    art: (
      <>
        <circle cx="15" cy="15" r="13" fill="#00aff0" />
        <circle cx="8" cy="8" r="7" fill="#00aff0" />
        <circle cx="25" cy="25" r="6.500" fill="#00aff0" />
        <path d="M21 10c-2-4-11-4-11 1 0 6 11 3 11 8.500 0 4.500-10 5-12-.5" fill="none" stroke="#fff" strokeWidth="3.500" />
        <path d="M20.500 25a4 4 0 0 1 7-2M28.500 26a4 4 0 0 1-7 2M28.500 20v3h-3M20.500 31v-3h3" fill="none" stroke="#fff" strokeWidth="1.200" />
      </>
    ),
  },
  {
    label: "Web Editor",
    open: true,
    art: (
      <>
        <circle cx="16" cy="16" r="14.500" fill="#a9c8f4" stroke="#1a2b6e" strokeWidth="1.500" />
        <path d="M4 9c4-6 10-6 15-5l-4 5-7 2zM3 16l7 1 4 6-4 5c-4-3-7-7-7-12z" fill="#4a78cc" />
        <path d="M7 8c3-3 6-3 8-2l-4 3z" fill="#e8f1fd" />
        <path d="M15 30C13 22 16 13 21 9l1-6 5 1v4l4 3c2 5 0 10-4 13-4 4-8 5-12 6z" fill="#f8cd20" />
        <path d="M14 31C18 23 22 14 26 8" stroke="#a8690c" fill="none" strokeWidth="1.500" />
      </>
    ),
  },
  {
    label: "Adobe Reader",
    open: true,
    art: (
      <>
        <path d="M2 1h28v27H2z" fill="#b80a0a" />
        <path d="M2 1h28L2 18z" fill="#dd1010" />
        <path d="M15 6c3-2 2 5 0 10-2 5-5 8-7 7-2-2 4-5 8-6s10-1 10 1-5 1-8-3c-2-3-5-7-3-9z" fill="none" stroke="#fff" strokeWidth="1.500" />
      </>
    ),
  },
  {
    label: "WordPad",
    open: true,
    art: (
      <>
        <path d="M6 3h20l2 25H4z" fill="#e4effa" stroke="#6b93bd" />
        <path d="M6 2h21v3H6z" fill="#4e9bd8" />
        <path d="M18 9h7M18 12h7M18 15h7M7 20h18M6 23h19M6 26h12" stroke="#5f7fa8" />
        <text x="6" y="18" fontSize="15" fontWeight="700" fill="#e57517" fontFamily="'Liberation Serif', serif">A</text>
      </>
    ),
  },
  {
    label: "Inventor",
    open: true,
    active: true,
    art: (
      <>
        <path d="M0 0h32v32H0z" fill="#eda95e" />
        <path d="M0 0h22L0 22z" fill="#f8d6b0" />
        <path d="M32 8v24H14z" fill="#e2842c" />
        <g transform="translate(3 0) scale(.82)"><InventorGlyph /></g>
        <text x="16.500" y="31" fontSize="7" fontWeight="700" fill="#fff" textAnchor="middle" fontFamily="'Liberation Sans', sans-serif">PRO</text>
      </>
    ),
  },
  {
    label: "Paint",
    open: true,
    art: (
      <>
        <path d="M2 18C2 10 10 6 18 7c8 0 12 5 10 11-1 3-4 3-5 6s-4 6-9 4C11 26 12 23 9 22s-7 0-7-4z" fill="#cfe3f5" stroke="#7aa3c8" />
        <circle cx="7" cy="17" r="2.500" fill="#d8402c" />
        <circle cx="12" cy="12" r="2.500" fill="#4fae3c" />
        <circle cx="19" cy="11" r="2.500" fill="#eeb623" />
        <circle cx="15" cy="19" r="2.500" fill="#5c7ba0" />
        <path d="M17 31L26 10" stroke="#e2882e" strokeWidth="2.500" />
        <path d="M23 9l1-5 5-3 3 3-3 5-4 2z" fill="#b99062" />
      </>
    ),
  },
];

const Taskbar = () => (
  <footer className="flex h-10 shrink-0 items-center bg-[#686868] pt-px text-[#f4f4f4]">
    <button type="button" aria-label="Start" className="flex w-[50px] justify-center">
      <svg viewBox="0 0 26 25" className="h-[25px] w-[26px]" fill="#fff">
        <path d="M0 4l11.500-1.600V12H0zM12.500 2.200L26 0v12H12.500zM0 13h11.500v9.600L0 21zM12.500 13H26v12l-13.500-2z" />
      </svg>
    </button>
    <div className="ml-0.5 flex gap-1">
      {apps.map(({ label, open, active, art }) => (
        <button
          key={label}
          type="button"
          aria-label={label}
          className={`flex h-[38px] w-[58px] items-center justify-center ${active ? "border border-white bg-[#9d9d9d]" : open ? "border border-[#a9a9a9] bg-[#808080]" : ""}`}
        >
          <svg viewBox="0 0 32 32" className="size-8">{art}</svg>
        </button>
      ))}
    </div>
    <div className="ml-auto flex items-center pr-[18px]">
      <svg viewBox="0 0 8 5" className="h-[5px] w-2" aria-hidden="true"><path d="M4 0l4 5H0z" fill="#eee" /></svg>
      <svg viewBox="0 0 16 16" className="ml-3 size-4" fill="#fff" aria-hidden="true"><path d="M1 1h2v15H1zM4 2h6v2l5 .5-1.500 3L15 10l-6-.5V9H4z" /></svg>
      <svg viewBox="0 0 16 16" className="ml-[9px] size-4" aria-hidden="true">
        <path d="M4.500 0L8 2.500 4 5 .5 2.500zM11.500 0L8 2.500 12 5l3.500-2.500zM4 5l4 2.500L4.500 10 .5 7.500zM12 5L8 7.500l3.500 2.500 4-2.500zM8 8.500l3.500 2.500L8 13.500 4.500 11z" fill="#fff" />
        <circle cx="11.500" cy="11.500" r="4.300" fill="#35a83a" />
        <path d="M9.500 11.500l1.500 1.500 2.500-3" fill="none" stroke="#fff" strokeWidth="1.200" />
      </svg>
      <svg viewBox="0 0 10 16" className="ml-3.5 h-4 w-2.5" fill="none" stroke="#fff" aria-hidden="true">
        <path d="M1 2.500h8v13H1zM3.500 1h3" strokeWidth="1.500" />
        <path d="M3 9h4v5H3z" fill="#fff" stroke="none" />
      </svg>
      <svg viewBox="0 0 16 14" className="ml-2 h-3.5 w-4" fill="#fff" aria-hidden="true">
        <path d="M0 11h2v2H0zM3.200 9h2v4h-2zM6.400 7h2v6h-2zM9.600 4h2v9h-2zM12.800 1h2v12h-2z" />
      </svg>
      <svg viewBox="0 0 16 16" className="ml-2 size-4" aria-hidden="true">
        <path d="M1 5.500h2.500L7.500 2v12l-4-3.500H1z" fill="#fff" />
        <path d="M9.500 5.500c1 1.500 1 3.500 0 5M11.500 4c2 2.500 2 5.500 0 8M13.500 2.500c2.500 3 2.500 8 0 11" fill="none" stroke="#fff" />
      </svg>
      <time className="ml-[18px] text-center text-[11px] leading-[17px]" dateTime="2015-06-23T14:56">
        02:56 p.m.<br />23/06/2015
      </time>
    </div>
  </footer>
);

export default function App() {
  return (
    <div className="flex h-screen flex-col overflow-hidden bg-[#f0f0f0] font-['Open_Sans','Noto_Sans',sans-serif] text-[12px] leading-4 select-none">
      <Header />
      <Ribbon />
      <div className="flex min-h-0 flex-1 pr-0.5">
        <Browser />
        <Viewport />
      </div>
      <StatusBar />
      <Taskbar />
    </div>
  );
}
